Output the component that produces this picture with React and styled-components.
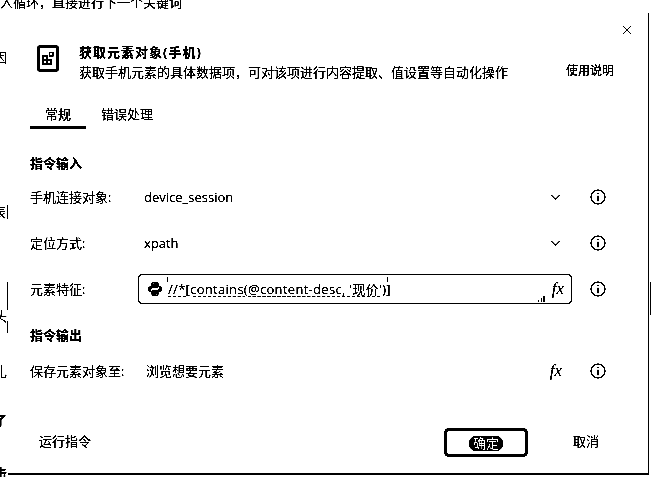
import styled, { createGlobalStyle } from 'styled-components'
import { ChevronDown, X } from 'lucide-react'

const Global = createGlobalStyle`
  html, body { margin: 0; padding: 0; background: #fff; }
  body { font-family: "Open Sans", "Noto Sans CJK SC", sans-serif; color: #000; }
`
const Page = styled.div`
  position: relative;
  width: 653px;
  height: 477px;
  overflow: hidden;
  background: #fff;
  filter: grayscale(1) brightness(0.78) contrast(6);
`
const Behind = styled.span`
  position: absolute;
  left: ${p => p.$left || 0}px;
  top: ${p => p.$top}px;
  font-size: 13px;
  line-height: 16px;
  white-space: nowrap;
  font-weight: ${p => (p.$bold ? 700 : 400)};
`
const Tick = styled.i`
  position: absolute;
  left: ${p => p.$left || 7}px;
  top: ${p => p.$top}px;
  height: ${p => p.$h}px;
  width: 1px;
  background: #000;
`
const Dialog = styled.div`
  position: absolute;
  left: 8px;
  top: 13px;
  width: 641px;
  height: 462px;
  box-sizing: border-box;
  display: flex;
  flex-direction: column;
  background: #fff;
  border-right: 1px solid #000;
  border-bottom: 2px solid #000;
`
const TopBar = styled.div`
  height: 32px;
  display: flex;
  justify-content: flex-end;
  padding: 9px 13px 0 0;
  box-sizing: border-box;
`
const Header = styled.div`
  height: 35px;
  display: flex;
  padding: 0 34px 0 29px;
`
const AppIcon = styled.svg`
  width: 22px;
  height: 27px;
  margin-right: 20px;
  flex: none;
`
const HeadText = styled.div`
  display: flex;
  flex-direction: column;
  justify-content: space-between;
`
const Title = styled.div`
  font-size: 13px;
  font-weight: 700;
  line-height: 14px;
  letter-spacing: 1px;
`
const Desc = styled.div`
  font-size: 13px;
  line-height: 15px;
`
const Help = styled.a`
  margin-left: auto;
  margin-bottom: 2px;
  font-size: 12px;
  line-height: 15px;
  align-self: flex-end;
  font-weight: 500;
`
const Tabs = styled.div`
  display: flex;
  margin-top: 24px;
  padding-left: 22px;
  height: 25px;
`
const Tab = styled.div`
  padding: 0 15px;
  font-size: 13px;
  line-height: 20px;
  font-weight: ${p => (p.$active ? 500 : 400)};
  border-bottom: 3px solid ${p => (p.$active ? '#000' : 'transparent')};
`
const SectionTitle = styled.div`
  margin: ${p => p.$gap}px 0 0 22px;
  height: 20px;
  font-size: 13px;
  line-height: 20px;
  font-weight: 700;
`
const Row = styled.div`
  display: flex;
  align-items: center;
  height: 30px;
  margin: ${p => p.$gap}px 0 0 22px;
`
const Label = styled.label`
  width: 108px;
  flex: none;
  font-size: 13px;
  padding-bottom: 2px;
`
const Field = styled.div`
  position: relative;
  width: 434px;
  height: 30px;
  box-sizing: border-box;
  display: flex;
  align-items: center;
  padding: 0 6px 0 ${p => p.$indent || 5}px;
  font-size: 13px;
  border-radius: 4px;
  border: 1px solid ${p => (p.$boxed ? '#000' : 'transparent')};
`
const Value = styled.span`
  flex: 1;
  white-space: nowrap;
  padding-bottom: 1px;
`
const Code = styled.span`
  flex: 1;
  margin-left: 5px;
  padding-bottom: 2px;
  white-space: nowrap;
  letter-spacing: 0.3px;
  text-decoration: underline dashed 1px;
  text-underline-offset: 2px;
`
const Chevron = styled(ChevronDown)`
  margin-right: 2px;
`
const Fx = styled.span`
  font-family: "Liberation Serif", serif;
  font-style: italic;
  font-size: 17px;
  margin-right: ${p => p.$shift || 0}px;
`
const Corner = styled.i`
  position: absolute;
  left: ${p => p.$left}px;
  top: ${p => p.$top}px;
  width: 1px;
  height: ${p => p.$h}px;
  background: #000;
`
const Grip = styled.svg`
  position: absolute;
  right: 26px;
  bottom: 1px;
`
const InfoSlot = styled.svg`
  margin-left: 18px;
  width: 16px;
  height: 16px;
  flex: none;
`
const PythonSvg = styled.svg`
  width: 16px;
  height: 16px;
  flex: none;
`
const Footer = styled.div`
  margin-top: auto;
  display: flex;
  align-items: center;
  padding: 0 49px 16px 31px;
  font-size: 13px;
`
const Run = styled.span`
  padding-bottom: 5px;
`
const Ok = styled.button`
  margin-left: auto;
  width: 84px;
  height: 29px;
  box-sizing: border-box;
  background: #fff;
  border: 3px solid #000;
  border-radius: 5px;
  font: inherit;
  padding: 0;
`
const OkText = styled.span`
  display: inline-block;
  line-height: 15px;
  padding: 0 4px;
  color: #fff;
  background: #000;
  border-radius: 7px;
`
const Cancel = styled.span`
  margin-left: 45px;
  padding-bottom: 5px;
`

const Tip = () => (
  <InfoSlot viewBox='0 0 16 16'>
    <circle cx='8' cy='8' r='7' fill='none' stroke='#000' strokeWidth='1.1' />
    <path d='M8 4v1M8 6.5v6' stroke='#000' strokeWidth='1.1' fill='none' />
  </InfoSlot>
)

const snake = 'M8 .8c-3 0-3.6 1.1-3.6 2.6v1.4H8v.6H3C1.4 5.4.8 6.7.8 8.1s.6 2.7 2.1 2.7h1.2V9.1c0-1.4 1-2.3 2.3-2.3h3.3c1.2 0 2-.9 2-2V3.4C11.7 1.8 10.2.8 8 .8z'

const PythonIcon = () => (
  <PythonSvg viewBox='0 0 16 16'>
    <path d={snake} />
    <path d={snake} transform='rotate(180 8 8)' />
    <circle cx='6.1' cy='2.8' r='0.7' fill='#fff' />
    <circle cx='9.9' cy='13.2' r='0.7' fill='#fff' />
  </PythonSvg>
)

export default function App () {
  return (
    <Page>
      <Global />
      <Behind $top={-6}>入循环，直接进行下一个关键词</Behind>
      <Behind $left={-6} $top={49}>因</Behind>
      <Behind $left={-7} $top={204}>表</Behind>
      <Tick $top={205} $h={14} />
      <Tick $top={282} $h={28} />
      <Behind $left={-6} $top={308}>头</Behind>
      <Tick $top={321} $h={12} />
      <Behind $left={-6} $top={363}>扎</Behind>
      <Behind $left={-6} $top={412} $bold>了</Behind>
      <Behind $left={-6} $top={465} $bold>击</Behind>
      <Dialog>
        <TopBar><X size={16} strokeWidth={1.2} /></TopBar>
        <Header>
          <AppIcon viewBox='0 0 22 27'>
            <rect x='1.5' y='1.5' width='19' height='24' rx='1.5' fill='none' stroke='#000' strokeWidth='2.5' />
            <path d='M6 11h4v4H6zM11 15h-1v-4M6 15v4h4v-4M10 15h4v4h-4z' fill='none' stroke='#000' strokeWidth='1.4' />
            <rect x='12.5' y='7.5' width='3.5' height='3.5' fill='none' stroke='#000' strokeWidth='1.2' />
          </AppIcon>
          <HeadText>
            <Title>获取元素对象(手机)</Title>
            <Desc>获取手机元素的具体数据项，可对该项进行内容提取、值设置等自动化操作</Desc>
          </HeadText>
          <Help>使用说明</Help>
        </Header>
        <Tabs>
          <Tab $active>常规</Tab>
          <Tab>错误处理</Tab>
        </Tabs>
        <SectionTitle $gap={24}>指令输入</SectionTitle>
        <Row $gap={9}>
          <Label>手机连接对象:</Label>
          <Field><Value>device_session</Value><Chevron size={15} strokeWidth={1.8} /></Field>
          <Tip />
        </Row>
        <Row $gap={16}>
          <Label>定位方式:</Label>
          <Field><Value>xpath</Value><Chevron size={15} strokeWidth={1.8} /></Field>
          <Tip />
        </Row>
        <Row $gap={16}>
          <Label>元素特征:</Label>
          <Field $boxed $indent={8}>
            <PythonIcon />
            <Code>//*[contains(@content-desc, '现价')]</Code>
            <Fx $shift={1}>fx</Fx>
            <Corner $left={28} $top={2} $h={5} />
            <Corner $left={248} $top={2} $h={5} />
            <Grip width='7' height='6' viewBox='0 0 7 6'>
              <path d='M0 5h1M3 5h1M5 5h2M3 3h1M5 3h2M5 1h2' stroke='#000' />
            </Grip>
          </Field>
          <Tip />
        </Row>
        <SectionTitle $gap={21}>指令输出</SectionTitle>
        <Row $gap={11}>
          <Label>保存元素对象至:</Label>
          <Field $indent={7}><Value>浏览想要元素</Value><Fx $shift={3}>fx</Fx></Field>
          <Tip />
        </Row>
        <Footer>
          <Run>运行指令</Run>
          <Ok><OkText>确定</OkText></Ok>
          <Cancel>取消</Cancel>
        </Footer>
      </Dialog>
      <Tick $left={650} $top={282} $h={33} />
    </Page>
  )
}
